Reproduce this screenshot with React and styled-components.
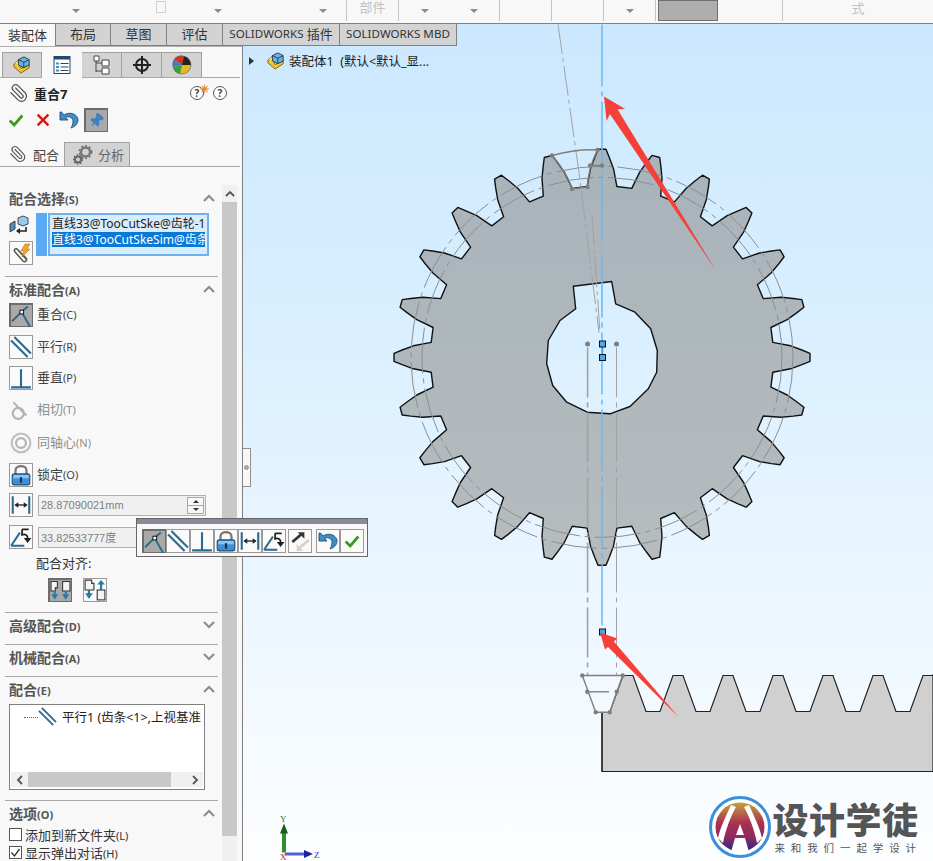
import React from 'react';
import styled, { createGlobalStyle } from 'styled-components';
import { Paperclip, Pin } from 'lucide-react';

const Global = createGlobalStyle`
  html, body { margin: 0; padding: 0; height: 100%; overflow: hidden; }
  body { background: #f8f8f8; font-family: "Noto Sans", "Noto Sans CJK SC", sans-serif; }
  * { box-sizing: border-box; }
`;

const Page = styled.div`
  width: 933px;
  height: 861px;
  position: relative;
  overflow: hidden;
  display: flex;
  flex-direction: column;
`;

/* ---- ribbon remains at the very top ---- */
const Ribbon = styled.div`
  height: 24px;
  flex: none;
  display: flex;
  background: #f8f8f8;
  border-bottom: 1px solid #808080;
  padding-bottom: 2px;
`;
const Segment = styled.div`
  width: ${p => p.$w}px;
  display: flex;
  align-items: center;
  justify-content: ${p => (p.$center ? 'center' : 'flex-start')};
  border-right: ${p => (p.$sep ? '1px solid #c4c4c4' : 'none')};
  padding-bottom: ${p => p.$lift || 0}px;
  color: #c2c2c2;
  font-size: 13px;
  line-height: 1;
`;
const Caret = styled.span`
  flex: none;
  margin-left: ${p => p.$ml || 0}px;
  width: 0;
  height: 0;
  border-left: 4px solid transparent;
  border-right: 4px solid transparent;
  border-top: 4px solid #8c8c8c;
`;
const FadedBox = styled.span`
  flex: none;
  margin-left: ${p => p.$ml}px;
  margin-top: -7px;
  width: 10px;
  height: 12px;
  border: 1px solid #cfcfcf;
`;
const SelectedSwatch = styled.div`
  width: 60px;
  height: 21px;
  margin-top: -1px;
  background: #aeaeae;
  border: 1px solid #6e6e6e;
`;

/* ---- main area ---- */
const Main = styled.div`
  flex: 1;
  min-height: 0;
  position: relative;
  display: flex;
`;
const TabBar = styled.div`
  position: absolute;
  top: 0;
  left: 0;
  display: flex;
  height: 22px;
  z-index: 2;
`;
const TopTab = styled.div`
  width: ${p => p.$w}px;
  display: flex;
  align-items: center;
  justify-content: center;
  padding-bottom: 2px;
  font-size: 13px;
  color: #333;
  white-space: nowrap;
  background: ${p => (p.$active ? '#f8f8f8' : '#d3d3d3')};
  border-right: ${p => (p.$active ? 'none' : '1px solid #808080')};
  border-bottom: ${p => (p.$active ? 'none' : '1px solid #808080')};
  border-left: ${p => (p.$first ? '1px solid #808080' : 'none')};
`;
const Latin = styled.span`
  font-size: 11.6px;
  white-space: pre;
`;

const Panel = styled.aside`
  width: 242px;
  flex: none;
  padding-top: 22px;
  display: flex;
  flex-direction: column;
  background: #f8f8f8;
`;
const PanelHead = styled.div`
  height: 122px;
  flex: none;
  border-top: 1px solid #b0b0b0;
  display: flex;
  flex-direction: column;
`;
const IconTabs = styled.div`
  display: flex;
  margin: 5px 2px 0 0;
  padding-left: 2px;
  border-bottom: 1px solid #a8a8a8;
  height: 26px;
`;
const IconTab = styled.div`
  width: 40px;
  height: ${p => (p.$active ? 26 : 25)}px;
  display: flex;
  align-items: center;
  justify-content: center;
  background: ${p => (p.$active ? '#f8f8f8' : '#d3d3d3')};
  border: 1px solid #a0a0a0;
  border-left: ${p => (p.$first ? '1px solid #a0a0a0' : 'none')};
  border-top: ${p => (p.$active ? 'none' : '1px solid #a0a0a0')};
  border-bottom: none;
  ${p => p.$active && 'border-right: none;'}
`;
const TitleRow = styled.div`
  display: flex;
  align-items: center;
  height: 24px;
  margin-top: 3px;
  padding-left: 9px;
`;
const ClipWrap = styled.span`
  display: inline-flex;
  transform: ${p => (p.$flip ? 'scaleX(-1)' : 'none')};
  color: #555;
`;
const Title = styled.span`
  margin-left: 5px;
  font-size: 13px;
  font-weight: 700;
  color: #222;
  flex: 1;
`;
const Help = styled.span`
  position: relative;
  width: 14px;
  height: 14px;
  margin-right: ${p => p.$mr}px;
  border: 1.5px solid #555;
  border-radius: 50%;
  display: flex;
  align-items: center;
  justify-content: center;
  font-size: 10px;
  font-weight: 700;
  color: #444;
  background: #fff;
`;
const Spark = styled.span`
  position: absolute;
  top: -6px;
  right: -6px;
  font-size: 11px;
  color: #e88a20;
`;
const ActionRow = styled.div`
  display: flex;
  align-items: center;
  height: 24px;
  margin-top: 3px;
  padding-left: 7px;
`;
const ActionSlot = styled.span`
  width: ${p => p.$w}px;
  display: inline-flex;
`;

const IconBtn = styled.span`
  width: 24px;
  height: 24px;
  flex: none;
  display: inline-flex;
  align-items: center;
  justify-content: center;
  background: ${p => (p.$on ? '#a9a9a9' : '#fafafa')};
  border: 1px solid ${p => (p.$on ? '#6c6c6c' : '#9a9a9a')};
  ${p => p.$on && 'border-width: 2px 1px 1px 2px;'}
`;

const SubTabs = styled.div`
  display: flex;
  height: 25px;
  margin: 10px 2px 0 0;
  border-bottom: 1px solid #a8a8a8;
`;
const SubTab = styled.div`
  width: ${p => p.$w}px;
  height: 24px;
  display: flex;
  align-items: center;
  padding-left: ${p => (p.$active ? 9 : 8)}px;
  gap: ${p => (p.$active ? 6 : 5)}px;
  font-size: 13px;
  color: ${p => (p.$active ? '#444' : '#666')};
  background: ${p => (p.$active ? '#f8f8f8' : '#d3d3d3')};
  border-right: 1px solid #a0a0a0;
  border-top: ${p => (p.$active ? 'none' : '1px solid #a0a0a0')};
`;

const PanelBody = styled.div`
  flex: 1;
  min-height: 0;
  display: flex;
  padding-right: 5px;
`;
const Sections = styled.div`
  width: 222px;
  flex: none;
  padding: 17px 4px 0 5px;
`;
const Section = styled.section`
  height: ${p => p.$h}px;
  border-top: ${p => (p.$first ? 'none' : '1px solid #aaa')};
`;
const SectionHead = styled.div`
  height: ${p => (p.$first ? 28 : 27)}px;
  display: flex;
  align-items: center;
  justify-content: space-between;
  padding: 0 3px 3px 4px;
  font-size: 14px;
  font-weight: 700;
  color: #555;
`;
const Hotkey = styled.span`
  font-size: 11px;
  font-weight: ${p => (p.$plain ? 400 : 700)};
`;
const Selector = styled.div`
  display: flex;
  margin-left: 4px;
`;
const SelectorIcons = styled.div`
  width: 27px;
  flex: none;
  display: flex;
  flex-direction: column;
  align-items: flex-start;
  gap: 6px;
  padding-top: 2px;
`;
const SelectorStrip = styled.div`
  width: 11px;
  height: 43px;
  background: #5aaaf5;
`;
const SelectorList = styled.div`
  width: 161px;
  height: 43px;
  margin-left: 1px;
  padding: 1px 2px;
  background: #d9ecfb;
  border: 2px solid #6db2ee;
  font-size: 12px;
  overflow: hidden;
`;
const SelectorItem = styled.div`
  height: ${p => (p.$selected ? 15 : 16)}px;
  line-height: 15px;
  white-space: nowrap;
  overflow: hidden;
  color: ${p => (p.$selected ? '#fff' : '#222')};
  background: ${p => (p.$selected ? '#0a78d7' : 'transparent')};
`;

const Options = styled.div`
  margin: -1px 0 0 4px;
`;
const OptionRow = styled.div`
  display: flex;
  align-items: center;
  height: 24px;
  margin-bottom: ${p => p.$after}px;
  gap: 4px;
  font-size: 13px;
  color: ${p => (p.$off ? '#8f8f8f' : '#444')};
`;
const OptionText = styled.span`
  padding-bottom: 4px;
`;
const PlainSlot = styled.span`
  width: 24px;
  height: 24px;
  flex: none;
  display: inline-flex;
  align-items: center;
  justify-content: center;
`;
const NumberField = styled.div`
  width: 168px;
  height: 21px;
  margin-left: 1px;
  padding: 0 1px 0 2px;
  display: flex;
  align-items: center;
  justify-content: space-between;
  background: #f0f0f0;
  border: 1px solid #b0b0b0;
  color: #808080;
  font-family: "Liberation Sans", "Noto Sans CJK SC", sans-serif;
  font-size: 11px;
`;
const Spinner = styled.span`
  width: 17px;
  height: 17px;
  display: flex;
  flex-direction: column;
  border: 1px solid #a8a8a8;
  background: #f8f8f8;
`;
const SpinCell = styled.span`
  flex: 1;
  display: flex;
  align-items: center;
  justify-content: center;
  &:first-child { border-bottom: 1px solid #a8a8a8; }
  &::after {
    content: '';
    width: 0;
    height: 0;
    border-left: 3px solid transparent;
    border-right: 3px solid transparent;
    ${p => (p.$up ? 'border-bottom: 3px solid #333;' : 'border-top: 3px solid #333;')}
  }
`;
const AlignLabel = styled.div`
  margin: 0 0 6px 31px;
  height: 18px;
  line-height: 18px;
  font-size: 13px;
  color: #333;
`;
const AlignRow = styled.div`
  display: flex;
  gap: 11px;
  margin-left: 43px;
`;

const MateBox = styled.div`
  width: 196px;
  height: 86px;
  margin-left: 4px;
  background: #fff;
  border: 1px solid #808080;
  display: flex;
  flex-direction: column;
`;
const MateItem = styled.div`
  flex: 1;
  display: flex;
  align-items: flex-start;
  padding: 2px 0 0 14px;
  font-size: 12.5px;
  color: #222;
  white-space: nowrap;
  overflow: hidden;
`;
const MateText = styled.span`
  margin-left: 5px;
`;
const TreeDots = styled.span`
  width: 14px;
  flex: none;
  margin-top: 10px;
  border-top: 1px dotted #666;
`;
const HScroll = styled.div`
  height: 15px;
  margin: 0 1px 2px;
  display: flex;
  align-items: center;
  background: #f0f0f0;
`;
const HThumb = styled.div`
  width: 144px;
  height: 15px;
  margin: 0 3px 0 0;
  background: #c8c8c8;
`;
const ArrowCell = styled.span`
  width: 17px;
  flex: none;
  display: inline-flex;
  justify-content: center;
`;
const CheckList = styled.div`
  margin-top: -3px;
`;
const CheckRow = styled.div`
  display: flex;
  align-items: center;
  height: 18px;
  margin-left: 4px;
  gap: 3px;
  font-size: 13px;
  color: #333;
`;
const CheckBox = styled.span`
  width: 13px;
  height: 13px;
  flex: none;
  background: #fff;
  border: 1px solid #555;
  display: inline-flex;
  align-items: center;
  justify-content: center;
`;

const VScroll = styled.div`
  width: 15px;
  flex: none;
  margin-top: 17px;
  display: flex;
  flex-direction: column;
  background: #f0f0f0;
`;
const VArrow = styled.div`
  height: 17px;
  display: flex;
  align-items: center;
  justify-content: center;
`;
const VThumb = styled.div`
  height: 634px;
  background: #c8c8c8;
`;

/* ---- graphics area ---- */
const Viewport = styled.main`
  flex: 1;
  min-width: 0;
  position: relative;
  border-left: 1px solid #808080;
  background: linear-gradient(180deg, #cce8fe 0%, #d6eeff 30%, #e8f5ff 62%, #fbfdff 96%, #fdfeff 100%);
`;
const Canvas = styled.svg`
  position: absolute;
  inset: 0;
  width: 100%;
  height: 100%;
`;
const Tree = styled.div`
  position: absolute;
  left: 6px;
  top: 27px;
  display: flex;
  align-items: center;
  font-size: 12.5px;
  color: #222;
  white-space: nowrap;
`;
const TreeCaret = styled.span`
  width: 0;
  height: 0;
  border-top: 4px solid transparent;
  border-bottom: 4px solid transparent;
  border-left: 5px solid #333;
  margin-right: 13px;
`;
const TreeText = styled.span`
  margin-left: 4px;
`;
const SplitHandle = styled.div`
  position: absolute;
  left: 0;
  top: 424px;
  width: 8px;
  height: 39px;
  display: flex;
  align-items: center;
  background: #f8f8f8;
  border: 1px solid #909090;
  border-left: none;
`;
const HandleDot = styled.span`
  width: 5px;
  height: 5px;
  margin-left: 1px;
  border-radius: 50%;
  background: #aaa;
  border: 1px solid #999;
`;
const Logo = styled.div`
  position: absolute;
  right: 11px;
  bottom: 3px;
  display: flex;
  align-items: center;
  gap: 1px;
`;
const LogoText = styled.div`
  display: flex;
  flex-direction: column;
  color: #555;
  white-space: nowrap;
`;
const LogoTitle = styled.div`
  font-family: "Noto Sans CJK SC", sans-serif;
  font-size: 36px;
  font-weight: 900;
  letter-spacing: .5px;
  line-height: 36px;
`;
const LogoSub = styled.div`
  font-family: "Noto Sans CJK SC", sans-serif;
  font-size: 10.5px;
  line-height: 14px;
  letter-spacing: 5.9px;
  margin: 5px 0 0 2px;
`;

/* ---- floating mate toolbar ---- */
const Popup = styled.div`
  position: absolute;
  left: 136px;
  top: 518px;
  width: 232px;
  height: 39px;
  background: #f8f8f8;
  border: 1px solid #666;
  z-index: 3;
`;
const PopupBar = styled.div`
  height: 5px;
  background: #8a8a9a;
`;
const PopupRow = styled.div`
  display: flex;
  padding: 5px 0 0 5px;
`;
const PopupGap = styled.span`
  width: ${p => p.$w}px;
  flex: none;
`;

/* ---- icons ---- */
const TEAL = '#2a6a8e';

const Svg = ({ s = 20, children }) => (
  <svg width={s} height={s} viewBox="0 0 20 20">{children}</svg>
);
const AssemblyIcon = () => (
  <Svg s={18}>
    <path d="M1 9 L5 6 L9 14 L18 9 V13 L9 19 L1 12 Z" fill="#f1c232" stroke="#7a5a10" />
    <path d="M2 8 L5 5 L9 12" fill="#ffe38a" stroke="#7a5a10" strokeWidth=".6" />
    <path d="M12 1 L18 4 V10 L12 13 L6 10 V4 Z" fill="#62b4ea" stroke="#333" />
    <path d="M6 4 L12 7 L18 4 M12 7 V13" fill="none" stroke="#333" />
  </Svg>
);
const ListIcon = () => (
  <Svg>
    <rect x="2" y="1.5" width="16" height="17" fill="#fff" stroke="#24486b" />
    <rect x="2" y="1.5" width="16" height="3" fill="#24486b" />
    <path d="M4 7.5h3v2H4zM4 11h3v2H4zM4 14.5h3v2H4z" fill="#3f8fc4" />
    <path d="M8.5 8.5h8M8.5 12h8M8.5 15.5h8" stroke="#24486b" strokeWidth="1.2" />
  </Svg>
);
const ConfigIcon = () => (
  <Svg>
    <path d="M4 3v14M4 8h6M4 16h6" stroke="#444" fill="none" />
    <path d="M2 1h5v5H2z" fill="#fff" stroke="#444" />
    <path d="M10 5h7v6h-7zM10 13h7v6h-7z" fill="#fff" stroke="#444" />
  </Svg>
);
const CrossIcon = () => (
  <Svg>
    <circle cx="10" cy="10" r="6" fill="none" stroke="#222" strokeWidth="2" />
    <path d="M10 1v18M1 10h18" stroke="#222" strokeWidth="2" />
  </Svg>
);
const BallIcon = () => (
  <Svg>
    <circle cx="10" cy="10" r="9" fill="#e8b820" />
    <path d="M10 10 L2 4 A9 9 0 0 1 12 1 Z" fill="#d03020" />
    <path d="M10 10 L12 1 A9 9 0 0 1 19 10 Z" fill="#222" />
    <path d="M10 10 L1 12 A9 9 0 0 0 8 19 Z" fill="#3f9f40" />
    <path d="M10 10 L1 12 A9 9 0 0 1 2 4 Z" fill="#3f80c4" />
    <circle cx="10" cy="10" r="9" fill="none" stroke="#666" strokeWidth=".7" />
  </Svg>
);
const Check = ({ s = 18 }) => (
  <Svg s={s}><path d="M3 10.5 L8 15.5 L17 5" fill="none" stroke="#3c9a1a" strokeWidth="3" /></Svg>
);
const Cross = () => (
  <Svg s={18}><path d="M4 4 L16 16 M16 4 L4 16" stroke="#e01010" strokeWidth="2.6" /></Svg>
);
const Undo = () => (
  <Svg>
    <path d="M1 2 V10 H9 L6.5 7.5 C10 5.5 14.5 8 14 12 C13.8 14.5 13 16 12 18 C16.5 16.5 19 13.5 19 10 C19 4.5 11 1 5 5 L2.5 2 Z" fill="#3f8fc4" stroke="#1f4f78" strokeWidth=".9" />
  </Svg>
);
const GearsIcon = () => (
  <Svg>
    <circle cx="12.5" cy="7" r="4.5" fill="none" stroke="#777" strokeWidth="2.4" />
    <circle cx="12.5" cy="7" r="6.2" fill="none" stroke="#777" strokeWidth="1.6" strokeDasharray="2 2" />
    <circle cx="5" cy="14.5" r="3" fill="none" stroke="#666" strokeWidth="2" />
    <circle cx="5" cy="14.5" r="4.5" fill="none" stroke="#666" strokeWidth="1.4" strokeDasharray="1.6 1.6" />
  </Svg>
);
const Chevron = ({ up }) => (
  <svg width="12" height="8" viewBox="0 0 12 8">
    <path d={up ? 'M1 7 L6 2 L11 7' : 'M1 1 L6 6 L11 1'} fill="none" stroke="#8a8a8a" strokeWidth="2" />
  </svg>
);
const Coincident = () => (
  <Svg s={22}>
    <path d="M1 15 L10 6 M10 6 L18 20 M10 6 L16 1" stroke={TEAL} strokeWidth="1.8" fill="none" />
    <rect x="8.5" y="4.5" width="3.5" height="3.5" fill="#fff" stroke="#111" strokeWidth=".9" />
  </Svg>
);
const Parallel = ({ s = 22 }) => (
  <Svg s={s}><path d="M1 4 L16 19 M4 1 L19 16" stroke={TEAL} strokeWidth="1.9" fill="none" /></Svg>
);
const Perp = () => (
  <Svg s={22}><path d="M10 2 V18 M1 18.5 H19" stroke={TEAL} strokeWidth="1.9" fill="none" /></Svg>
);
const Tangent = () => (
  <Svg s={22}>
    <circle cx="7.5" cy="13" r="5" fill="none" stroke="#b4b4b4" strokeWidth="2" />
    <path d="M3 3 L15 15" stroke="#b4b4b4" strokeWidth="1.8" />
  </Svg>
);
const Concentric = () => (
  <Svg s={22}>
    <circle cx="10" cy="10" r="8.5" fill="none" stroke="#c0c0c0" strokeWidth="2" />
    <circle cx="10" cy="10" r="4.5" fill="none" stroke="#b4b4b4" strokeWidth="2" />
  </Svg>
);
const Lock = () => (
  <Svg s={22}>
    <path d="M5 9 V6 C5 0.5 15 0.5 15 6 V9" fill="none" stroke="#777" strokeWidth="2" />
    <rect x="2" y="9" width="16" height="10" rx="2" fill="#3f8fd4" stroke="#1f4f78" />
    <rect x="3" y="10" width="14" height="3" fill="#8cc4f0" />
    <rect x="9" y="12" width="2" height="5" fill="#1b2f4a" />
  </Svg>
);
const Distance = () => (
  <Svg s={22}>
    <path d="M2.5 2 V18 M17.5 2 V18" stroke={TEAL} strokeWidth="1.9" />
    <path d="M5 10 H15" stroke="#222" strokeWidth="1.2" />
    <path d="M4 10 L7.5 7.5 V12.5 Z M16 10 L12.5 7.5 V12.5 Z" fill="#222" />
  </Svg>
);
const Angle = () => (
  <Svg s={22}>
    <path d="M1 18 H13 M1 18 L9 6" stroke={TEAL} strokeWidth="1.8" fill="none" />
    <path d="M11 3 H17 M11 3 V8 C14 7 16 8.5 16 11" stroke="#222" strokeWidth="1.6" fill="none" />
    <path d="M12.5 11 H19.5 L16 15.5 Z" fill="#222" />
  </Svg>
);
const Flip = () => (
  <Svg s={22}>
    <path d="M3 11 L11 4" stroke="#333" strokeWidth="2.4" />
    <path d="M8 2 H14 V8 Z" fill="#333" />
    <path d="M18 9 L10 16" stroke="#d0d0d0" strokeWidth="2.4" />
    <path d="M13 19 H7 V13 Z" fill="#d0d0d0" />
  </Svg>
);
const AlignSame = () => (
  <Svg s={22}>
    <path d="M1 1h6v6h-2v3H1zM12 1h7v9h-7z" fill="#f4f4f4" stroke="#333" />
    <path d="M4.5 10 V17 M15 10 V17" stroke="#2a7aa8" strokeWidth="2" />
    <path d="M1 13 H8 L4.5 18 Z M11.5 13 H18.5 L15 18 Z" fill="#2a7aa8" />
  </Svg>
);
const AlignOpposite = () => (
  <Svg s={22}>
    <path d="M1 1h6v3h2v6H1z" fill="#f4f4f4" stroke="#333" />
    <rect x="12" y="10" width="7" height="9" fill="#f4f4f4" stroke="#333" />
    <path d="M4.5 10 V17 M15.5 3 V10" stroke="#2a7aa8" strokeWidth="2" />
    <path d="M1 13 H8 L4.5 18 Z M12 5 H19 L15.5 1 Z" fill="#2a7aa8" />
  </Svg>
);
const SwapIcon = () => (
  <Svg>
    <path d="M1 9 L6 6 V14 L1 17 Z" fill="#4f8fc0" stroke="#223" strokeWidth=".8" />
    <path d="M9 3 L14 1 L19 3 V9 L14 11 L9 9 Z" fill="#9cc8ea" stroke="#223" strokeWidth=".8" />
    <path d="M17 12 V16 H9" fill="none" stroke="#222" strokeWidth="1.6" />
    <path d="M11 13 L7 16 L11 19 Z" fill="#222" />
  </Svg>
);
const SmartIcon = () => (
  <Svg>
    <g transform="scale(-1 1) translate(-20 0)">
      <path d="M4 17 L13 7 C15 4 18 7 16 9 L8 18 C6 20 3 17 5 15 L12 8" fill="none" stroke="#555" strokeWidth="1.5" />
    </g>
    <path d="M14 1 L19 1 L16 6 L19 6 L11 14 L13 8 L10 8 Z" fill="#eda52a" stroke="#a86a10" strokeWidth=".5" />
  </Svg>
);

/* ---- gear geometry, in page pixels ---- */
const CX = 602;
const CY = 356.8;
const polar = (r, deg) => {
  const a = (deg * Math.PI) / 180;
  return `${(CX + r * Math.cos(a)).toFixed(1)},${(CY + r * Math.sin(a)).toFixed(1)}`;
};
const toothProfile = [
  [171.5, -5], [189, -3.5], [200, -2.1], [208, -1.1], [208, 1.1], [200, 2.1], [189, 3.5], [171.5, 5],
];
const gearOutline = Array.from({ length: 24 }, (_, i) =>
  toothProfile.map(([r, d]) => polar(r, i * 15 + d)).join(' L')
).join(' L');

// hole with keyway, read off the picture
const holePts = [
  [573.3, 285.7], [611.7, 281], [615.7, 303.3], [635, 311.7], [650.7, 328.3], [657.3, 350],
  [656.7, 371.7], [648.3, 388.3], [630, 406], [610, 413.3], [587.3, 411.7], [566.7, 401.7],
  [552.7, 385], [546.7, 363.3], [548.3, 340], [560, 320], [575.7, 308.3],
];
const gearPath = `M${gearOutline} Z M${holePts.map(p => p.join(',')).join(' L')} Z`;

// rack
const rackTop = [];
for (let k = 0; k < 7; k++) {
  const x = 623 + k * 50;
  rackTop.push(`${x},675 ${x + 10},675 ${x + 23},711 ${x + 37},711`);
}
const rackPts = `602,771 602,711 610,711 ${rackTop.join(' ')} 933,675 933,771`;

const GearDrawing = () => (
  <Canvas viewBox="243 24 690 836">
    <defs>
      <linearGradient id="gearFill" x1="0" y1="0" x2="0" y2="1">
        <stop offset="0" stopColor="#a8b3ba" />
        <stop offset="1" stopColor="#b6bcbe" />
      </linearGradient>
    </defs>

    <path d={gearPath} fill="url(#gearFill)" fillRule="evenodd" stroke="#111" strokeWidth="1.4" strokeLinejoin="round" />

    <g fill="none" stroke="#8b8f92" strokeWidth="1">
      <circle cx={CX} cy={CY} r="191" strokeDasharray="46 5 5 5" />
      <circle cx={CX} cy={CY} r="180" strokeDasharray="46 5 5 5" />
    </g>

    {/* construction lines */}
    <g fill="none" stroke="#a2a2a2" strokeWidth="1">
      <path d="M558 24 L579 172 L599 332" strokeDasharray="30 4 4 4" />
      <path d="M592 215 L600 332" strokeDasharray="30 4 4 4" />
      <path d="M587.6 347 V675" strokeWidth="1.6" strokeDasharray="50 5 5 5" />
      <path d="M616.5 347 V675" strokeDasharray="50 5 5 5" />
    </g>
    <path d="M602 24 V630" fill="none" stroke="#6cb8f0" strokeWidth="1.5" strokeDasharray="62 5 5 5" />
    <path d="M602.5 346 L602.5 354" stroke="#3f9ae8" strokeWidth="1.5" />

    {/* sketch tooth on the gear */}
    <g fill="none" stroke="#7e7e7e" strokeWidth="1.4">
      <path d="M552 155 Q578 148 597.5 149.5" />
      <path d="M552 155 Q567 172 572 188.5" />
      <path d="M572 188.5 L587.5 186.5" />
      <path d="M587.5 186.5 Q588 168 597.5 149.5" />
      <path d="M590 165 H602" />
    </g>
    <g fill="#7e7e7e">
      <circle cx="552" cy="155" r="2.2" />
      <circle cx="597.5" cy="149.5" r="2.2" />
      <circle cx="572" cy="188.5" r="2.2" />
      <circle cx="587.5" cy="186.5" r="2.2" />
      <circle cx="590" cy="165" r="2.2" />
      <circle cx="602" cy="165" r="2.2" />
      <circle cx="587.6" cy="343.5" r="2.5" />
      <circle cx="616.5" cy="343.5" r="2.5" />
    </g>

    {/* rack */}
    <polygon points={rackPts} fill="#d0d0d0" stroke="#222" strokeWidth="1.2" />

    {/* sketch tooth on the rack */}
    <path d="M605 711 H602 V771" fill="none" stroke="#222" strokeWidth="1.2" />
    <polygon points="582.3,675 622.7,675 609.7,711.7 595.7,711.7" fill="#f3f9fe" stroke="none" />
    <path d="M609.7 711.7 L622.7 675" stroke="#444" strokeWidth="1" />
    <g fill="none" stroke="#808080" strokeWidth="1.4">
      <path d="M582.3 675 H622.7 L609.7 711.7 H595.7 Z" />
      <path d="M587.3 691.3 H609" />
    </g>
    <g fill="#808080">
      <circle cx="582.3" cy="675" r="2.2" />
      <circle cx="622.7" cy="675" r="2.2" />
      <circle cx="587.3" cy="691.3" r="2.2" />
      <circle cx="616.7" cy="691.3" r="2.2" />
      <circle cx="595.7" cy="711.7" r="2.2" />
      <circle cx="609.7" cy="711.7" r="2.2" />
    </g>

    {/* selected end points */}
    <g fill="#4da6f0" stroke="#111" strokeWidth="1">
      <rect x="599.5" y="340.5" width="6" height="6" />
      <rect x="599.5" y="354" width="6" height="6" />
      <rect x="599.5" y="628.5" width="6" height="6" />
    </g>

    {/* red callout arrows */}
    <g fill="#f5403a">
      <polygon points="604,96 625.2,108.5 617.5,108.7 716,270 609.9,113.5 606.6,120.5" />
      <polygon points="600,632 617.3,638 613.8,641 679,717 608,646.4 605,649" />
    </g>

    {/* triad */}
    <path d="M284 852 V828" stroke="#2f8f2f" strokeWidth="4" />
    <path d="M284 823 L288 833 H280 Z" fill="#0f5f1f" />
    <path d="M285 853.5 H306" stroke="#5060d8" strokeWidth="3" />
    <path d="M313 853.5 L304 849.5 V857.5 Z" fill="#1a20a0" />
    <g fontFamily="Liberation Serif, serif" fontSize="9">
      <text x="280" y="821" fill="#1f7a2f">Y</text>
      <text x="314" y="857" fill="#2a30c0">Z</text>
      <text x="280" y="859" fill="#c02020">X</text>
    </g>
  </Canvas>
);

const LogoMark = () => (
  <svg width="62" height="62" viewBox="0 0 62 62">
    <defs>
      <linearGradient id="logoGrad" x1="0" y1="0" x2="0" y2="1">
        <stop offset="0" stopColor="#c4a23e" />
        <stop offset=".42" stopColor="#aa3050" />
        <stop offset=".72" stopColor="#8c2a62" />
        <stop offset="1" stopColor="#1f2a92" />
      </linearGradient>
    </defs>
    <circle cx="31" cy="31" r="29.5" fill="#fff" stroke="#3d8fdc" strokeWidth="3" />
    <circle cx="31" cy="31" r="24.5" fill="url(#logoGrad)" />
    <path d="M22 9 C17 20 11 32 9 42 L14 47 C17 32 22 20 27 11 Z" fill="#fff" />
    <path d="M40 9 C45 20 51 32 53 42 L48 47 C45 32 40 20 35 11 Z" fill="#fff" />
    <path d="M22 56 L26 42 H36 L40 56 C36 58 26 58 22 56 Z" fill="#fff" />
    <path d="M31 28 L35 39 H27 Z" fill="#fff" />
  </svg>
);

const option = (label, key) => (
  <OptionText>{label}<Hotkey $plain>{key}</Hotkey></OptionText>
);

const popupIcons = [Coincident, () => <Parallel />, Perp, Lock, Distance, Angle];

const App = () => (
  <Page>
    <Global />
    <Ribbon>
      <Segment $w={347} $sep>
        <Caret $ml={72} />
        <FadedBox $ml={76} />
        <Caret $ml={48} />
        <Caret $ml={97} />
      </Segment>
      <Segment $w={52} $sep $center $lift={6}>部件</Segment>
      <Segment $w={101} $sep>
        <Caret $ml={22} />
        <Caret $ml={41} />
      </Segment>
      <Segment $w={52} $sep />
      <Segment $w={52} $sep />
      <Segment $w={52} $sep $center><Caret /></Segment>
      <Segment $w={64} $center><SelectedSwatch /></Segment>
      <Segment $w={63} $sep />
      <Segment $w={150} $center $lift={5}>式</Segment>
    </Ribbon>

    <Main>
      <TabBar>
        <TopTab $w={55} $active>装配体</TopTab>
        <TopTab $w={56} $first>布局</TopTab>
        <TopTab $w={56}>草图</TopTab>
        <TopTab $w={56}>评估</TopTab>
        <TopTab $w={117}><Latin>SOLIDWORKS </Latin>插件</TopTab>
        <TopTab $w={117}><Latin>SOLIDWORKS MBD</Latin></TopTab>
      </TabBar>

      <Panel>
        <PanelHead>
          <IconTabs>
            <IconTab $first><AssemblyIcon /></IconTab>
            <IconTab $active><ListIcon /></IconTab>
            <IconTab><ConfigIcon /></IconTab>
            <IconTab><CrossIcon /></IconTab>
            <IconTab><BallIcon /></IconTab>
          </IconTabs>
          <TitleRow>
            <ClipWrap $flip><Paperclip size={20} strokeWidth={1.5} /></ClipWrap>
            <Title>重合7</Title>
            <Help $mr={9}>?<Spark>✳</Spark></Help>
            <Help $mr={15}>?</Help>
          </TitleRow>
          <ActionRow>
            <ActionSlot $w={27}><Check /></ActionSlot>
            <ActionSlot $w={25}><Cross /></ActionSlot>
            <ActionSlot $w={25}><Undo /></ActionSlot>
            <IconBtn $on>
              <Pin size={15} color="#3b82c4" fill="#3b82c4" style={{ transform: 'rotate(40deg)' }} />
            </IconBtn>
          </ActionRow>
          <SubTabs>
            <SubTab $w={65} $active>
              <ClipWrap $flip><Paperclip size={18} strokeWidth={1.5} /></ClipWrap>配合
            </SubTab>
            <SubTab $w={65}><GearsIcon />分析</SubTab>
          </SubTabs>
        </PanelHead>

        <PanelBody>
          <Sections>
            <Section $first $h={91}>
              <SectionHead $first><span>配合选择<Hotkey>(S)</Hotkey></span><Chevron up /></SectionHead>
              <Selector>
                <SelectorIcons>
                  <SwapIcon />
                  <IconBtn><SmartIcon /></IconBtn>
                </SelectorIcons>
                <SelectorStrip />
                <SelectorList>
                  <SelectorItem>直线33@TooCutSke@齿轮-1&lt;1&gt;</SelectorItem>
                  <SelectorItem $selected>直线3@TooCutSkeSim@齿条&lt;1&gt;</SelectorItem>
                </SelectorList>
              </Selector>
            </Section>

            <Section $h={336}>
              <SectionHead><span>标准配合<Hotkey>(A)</Hotkey></span><Chevron up /></SectionHead>
              <Options>
                <OptionRow $after={8}><IconBtn $on><Coincident /></IconBtn>{option('重合', '(C)')}</OptionRow>
                <OptionRow $after={7}><IconBtn><Parallel /></IconBtn>{option('平行', '(R)')}</OptionRow>
                <OptionRow $after={8}><IconBtn><Perp /></IconBtn>{option('垂直', '(P)')}</OptionRow>
                <OptionRow $after={9} $off><PlainSlot><Tangent /></PlainSlot>{option('相切', '(T)')}</OptionRow>
                <OptionRow $after={8} $off><PlainSlot><Concentric /></PlainSlot>{option('同轴心', '(N)')}</OptionRow>
                <OptionRow $after={6}><IconBtn><Lock /></IconBtn>{option('锁定', '(O)')}</OptionRow>
                <OptionRow $after={8}>
                  <IconBtn><Distance /></IconBtn>
                  <NumberField>
                    28.87090021mm
                    <Spinner><SpinCell $up /><SpinCell /></Spinner>
                  </NumberField>
                </OptionRow>
                <OptionRow $after={5}>
                  <IconBtn><Angle /></IconBtn>
                  <NumberField>33.82533777度</NumberField>
                </OptionRow>
              </Options>
              <AlignLabel>配合对齐:</AlignLabel>
              <AlignRow>
                <IconBtn $on><AlignSame /></IconBtn>
                <IconBtn><AlignOpposite /></IconBtn>
              </AlignRow>
            </Section>

            <Section $h={32}>
              <SectionHead><span>高级配合<Hotkey>(D)</Hotkey></span><Chevron /></SectionHead>
            </Section>
            <Section $h={32}>
              <SectionHead><span>机械配合<Hotkey>(A)</Hotkey></span><Chevron /></SectionHead>
            </Section>

            <Section $h={124}>
              <SectionHead><span>配合<Hotkey>(E)</Hotkey></span><Chevron up /></SectionHead>
              <MateBox>
                <MateItem>
                  <TreeDots />
                  <Parallel s={19} />
                  <MateText>平行1 (齿条&lt;1&gt;,上视基准</MateText>
                </MateItem>
                <HScroll>
                  <ArrowCell>
                    <svg width="8" height="10" viewBox="0 0 8 10"><path d="M6 1 L2 5 L6 9" fill="none" stroke="#555" strokeWidth="1.8" /></svg>
                  </ArrowCell>
                  <HThumb />
                  <PopupGap $w={12} />
                  <ArrowCell>
                    <svg width="8" height="10" viewBox="0 0 8 10"><path d="M2 1 L6 5 L2 9" fill="none" stroke="#555" strokeWidth="1.8" /></svg>
                  </ArrowCell>
                </HScroll>
              </MateBox>
            </Section>

            <Section $h={61}>
              <SectionHead><span>选项<Hotkey>(O)</Hotkey></span><Chevron up /></SectionHead>
              <CheckList>
                <CheckRow><CheckBox /><span>添加到新文件夹<Hotkey $plain>(L)</Hotkey></span></CheckRow>
                <CheckRow>
                  <CheckBox>
                    <svg width="11" height="11" viewBox="0 0 11 11"><path d="M1.5 5.5 L4.5 9 L9.5 2" fill="none" stroke="#333" strokeWidth="1.3" /></svg>
                  </CheckBox>
                  <span>显示弹出对话<Hotkey $plain>(H)</Hotkey></span>
                </CheckRow>
              </CheckList>
            </Section>
          </Sections>

          <VScroll>
            <VArrow>
              <svg width="10" height="7" viewBox="0 0 10 7"><path d="M1 6 L5 2 L9 6" fill="none" stroke="#555" strokeWidth="1.8" /></svg>
            </VArrow>
            <VThumb />
          </VScroll>
        </PanelBody>
      </Panel>

      <Viewport>
        <GearDrawing />
        <Tree>
          <TreeCaret />
          <AssemblyIcon />
          <TreeText>装配体1&nbsp;&nbsp;(默认&lt;默认_显...</TreeText>
        </Tree>
        <SplitHandle><HandleDot /></SplitHandle>
        <Logo>
          <LogoMark />
          <LogoText>
            <LogoTitle>设计学徒</LogoTitle>
            <LogoSub>来和我们一起学设计</LogoSub>
          </LogoText>
        </Logo>
      </Viewport>
    </Main>

    <Popup>
      <PopupBar />
      <PopupRow>
        {popupIcons.map((Icon, i) => (
          <IconBtn key={i} $on={i === 0}><Icon /></IconBtn>
        ))}
        <PopupGap $w={2} />
        <IconBtn><Flip /></IconBtn>
        <PopupGap $w={4} />
        <IconBtn><Undo /></IconBtn>
        <IconBtn><Check /></IconBtn>
      </PopupRow>
    </Popup>
  </Page>
);

export default App;
